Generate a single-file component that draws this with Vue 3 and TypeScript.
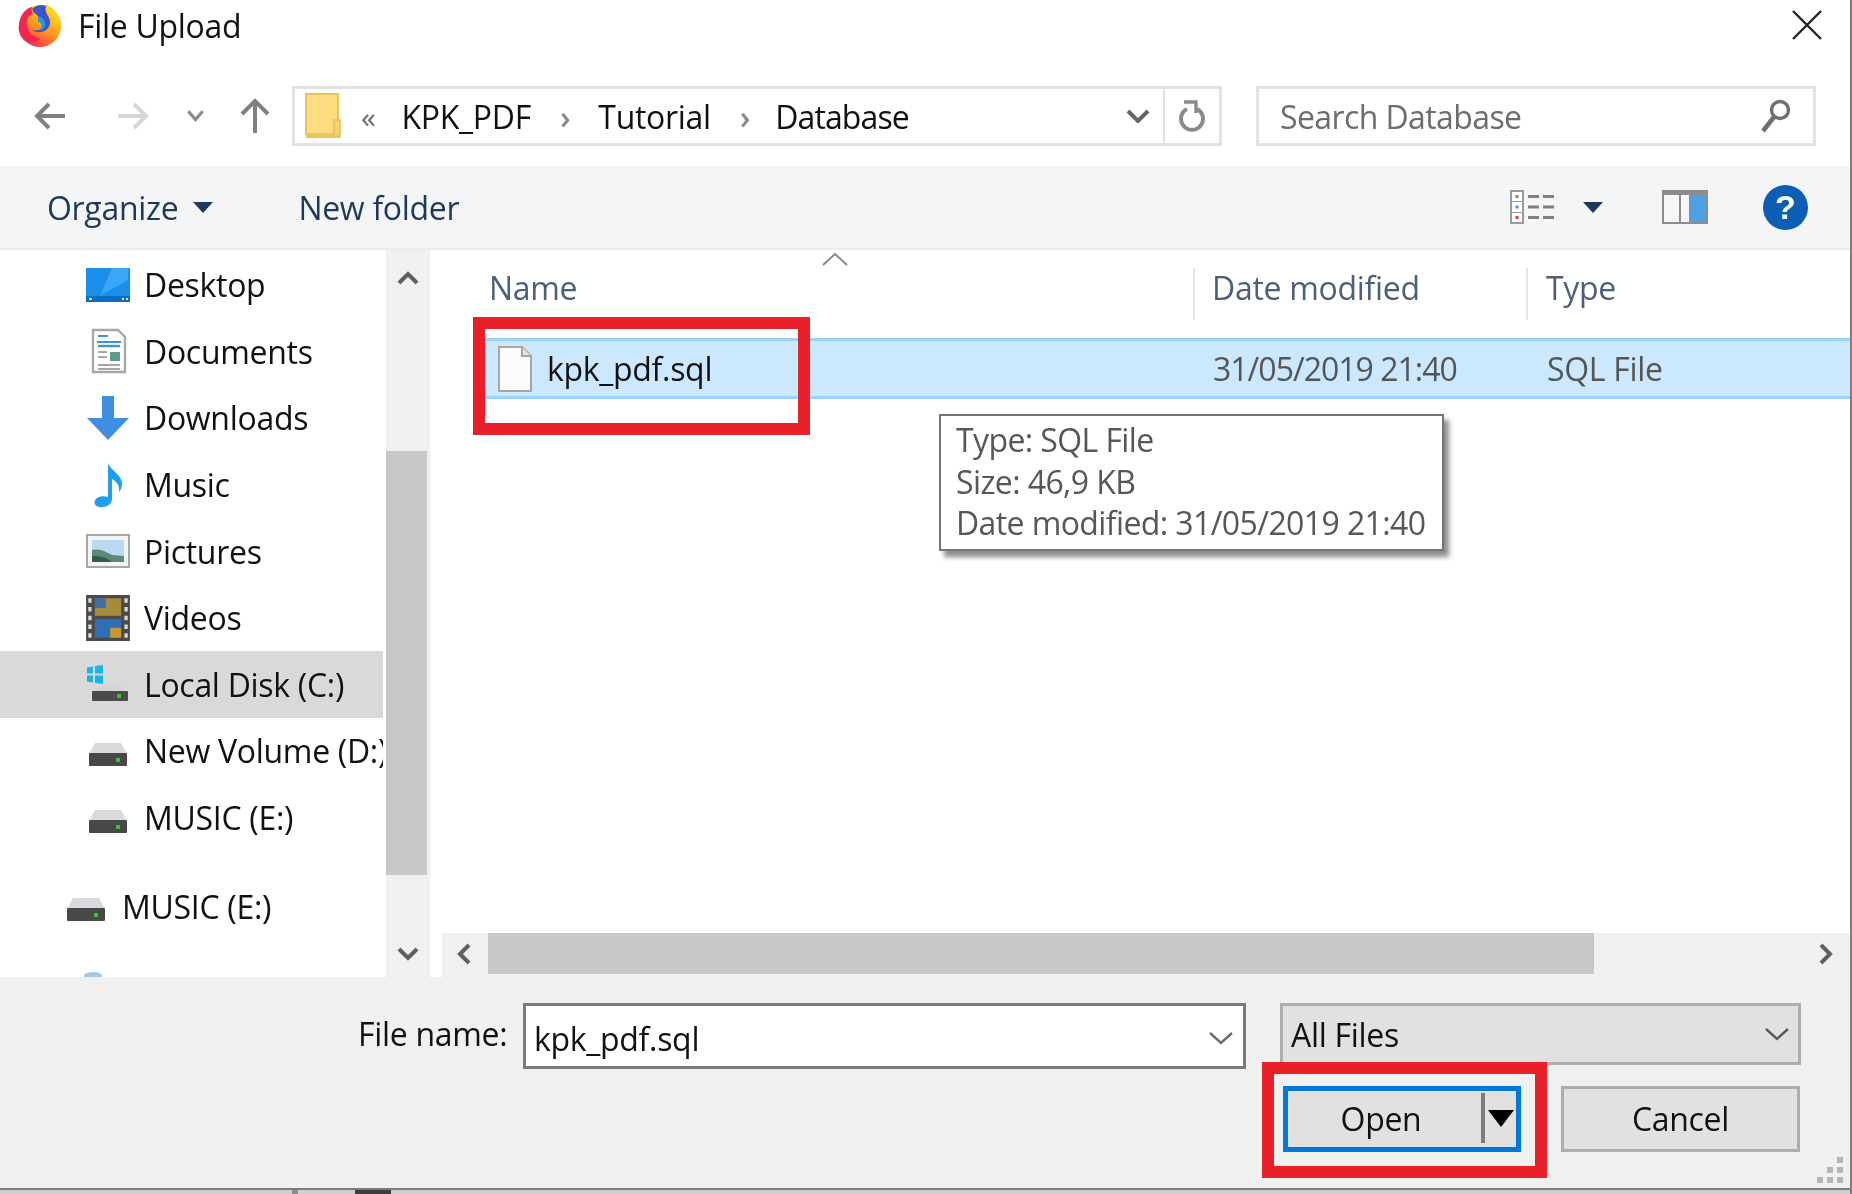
<script setup lang="ts">
interface Place {
  label: string;
  icon: string;
  selected?: boolean;
}

const places: Place[] = [
  { label: "Desktop", icon: "desktop" },
  { label: "Documents", icon: "documents" },
  { label: "Downloads", icon: "downloads" },
  { label: "Music", icon: "music" },
  { label: "Pictures", icon: "pictures" },
  { label: "Videos", icon: "videos" },
  { label: "Local Disk (C:)", icon: "system", selected: true },
  { label: "New Volume (D:)", icon: "drive" },
  { label: "MUSIC (E:)", icon: "drive" },
];

const tooltipLines = [
  "Type: SQL File",
  "Size: 46,9 KB",
  "Date modified: 31/05/2019 21:40",
];
</script>

<template>
  <div class="dialog">
    <header class="titlebar">
      <svg class="fx" viewBox="0 0 44 44">
        <defs>
          <linearGradient id="fxBody" x1="0.8" y1="0.05" x2="0.25" y2="1">
            <stop offset="0" stop-color="#ffe226" />
            <stop offset="0.5" stop-color="#ff9a1f" />
            <stop offset="1" stop-color="#f4284a" />
          </linearGradient>
        </defs>
        <circle cx="22" cy="23" r="21" fill="url(#fxBody)" />
        <path d="M1 21C2 12 8 5 14 4c-1 3 0 5 1 7-6 2-7 7-6 12 1 7 7 12 14 12-6 7-15 6-19 0-3-4-4-9-3-14z" fill="#f2264f" />
        <path d="M14 6c4-4 10-5 14-3-1 4 0 7 2 10 3 4 3 11-2 14-4 3-10 3-14 0 5 1 9 0 11-3 1-3-1-5-4-5-2-3 0-5-2-7-2-1-4-3-5-6z" fill="#3a55c8" />
        <path d="M21 13c4 2 7 6 6 10-1 3-3 4-6 4 3-2 3-4 2-6-1-2-3-3-3-5 0-1 0-2 1-3z" fill="#159fe6" />
        <path d="M28 1c7 4 15 11 15 22-2-6-5-9-8-12-4-3-7-6-7-10z" fill="#ffd21f" />
      </svg>
      <span class="title">File Upload</span>
      <svg class="close" viewBox="0 0 30 30">
        <path d="M1 1l28 28M29 1L1 29" stroke="#222" stroke-width="2.4" fill="none" />
      </svg>
    </header>

    <nav class="navbar">
      <svg class="nav-icon back" viewBox="0 0 34 30">
        <path d="M32 15H4M16 3L4 15l12 12" stroke="#808080" stroke-width="4" fill="none" />
      </svg>
      <svg class="nav-icon forward" viewBox="0 0 34 30">
        <path d="M2 15h28M18 3l12 12-12 12" stroke="#d6d6d6" stroke-width="4" fill="none" />
      </svg>
      <svg class="nav-icon recent" viewBox="0 0 14 10">
        <path d="M1 1l6 7 6-7" stroke="#8a8a8a" stroke-width="2.6" fill="none" />
      </svg>
      <svg class="nav-icon up" viewBox="0 0 32 36">
        <path d="M16 35V4M3 16L16 3l13 13" stroke="#808080" stroke-width="4" fill="none" />
      </svg>

      <div class="address">
        <svg class="folder" viewBox="0 0 36 46">
          <path d="M1 1h32v40H1z" fill="#fcdc80" stroke="#e9c35c" stroke-width="2" />
          <path d="M29 44V27h6v17z" fill="#f9d36b" stroke="#e4bd55" stroke-width="1.5" />
          <path d="M1 42h33v3H1z" fill="#e9c35c" />
        </svg>
        <span class="crumb-more">«</span>
        <span class="crumb crumb-first">KPK_PDF</span>
        <span class="crumb-sep">›</span>
        <span class="crumb">Tutorial</span>
        <span class="crumb-sep">›</span>
        <span class="crumb crumb-last">Database</span>
        <svg class="address-chevron" viewBox="0 0 24 14">
          <path d="M2 2l10 10L22 2" stroke="#666" stroke-width="4" fill="none" />
        </svg>
        <div class="refresh">
          <svg viewBox="0 0 28 36">
            <path d="M9 9a11 11 0 1 0 10 0" stroke="#8a8a8a" stroke-width="4" fill="none" />
            <path d="M6 2h12v11" stroke="#8a8a8a" stroke-width="3.4" fill="none" />
          </svg>
        </div>
      </div>

      <div class="search">
        <span>Search Database</span>
        <svg viewBox="0 0 32 36">
          <circle cx="20" cy="12" r="8.5" stroke="#6f6f6f" stroke-width="3.4" fill="none" />
          <path d="M14 19L3 33" stroke="#6f6f6f" stroke-width="4.6" />
        </svg>
      </div>
    </nav>

    <div class="toolbar">
      <span class="tool">Organize</span>
      <i class="tool-caret organize-caret"></i>
      <span class="tool new-folder">New folder</span>
      <div class="tool-right">
        <svg class="views" viewBox="0 0 46 34">
          <rect x="1" y="1" width="12" height="32" fill="#fff" stroke="#9a9a9a" stroke-width="2" />
          <path d="M2 11.500h10M2 22.500h10" stroke="#9a9a9a" />
          <rect x="5.500" y="5" width="3" height="3" fill="#8a8a8a" />
          <rect x="5.500" y="15.500" width="3" height="3" fill="#4b94e2" />
          <rect x="5.500" y="26" width="3" height="3" fill="#e0404a" />
          <path d="M18 6.500h11M33 6.500h11M18 17h11M33 17h11M18 27.500h11M33 27.500h11" stroke="#808080" stroke-width="3" />
        </svg>
        <i class="tool-caret view-caret"></i>
        <svg class="pane" viewBox="0 0 46 34">
          <rect width="46" height="34" fill="#8c8c8c" />
          <rect x="2" y="5" width="15" height="27" fill="#f6f6f6" />
          <rect x="19" y="5" width="8" height="27" fill="#f6f6f6" />
          <rect x="28" y="5" width="16" height="27" fill="#4f9fe3" />
        </svg>
        <div class="help">?</div>
      </div>
    </div>

    <main class="body">
      <aside class="sidebar">
        <div class="tree">
          <div
            v-for="place in places"
            :key="place.label + place.icon"
            class="place"
            :class="{ selected: place.selected }"
          >
            <span class="place-icon">
              <svg v-if="place.icon === 'desktop'" viewBox="0 0 44 36">
                <rect y="1" width="44" height="34" rx="1" fill="#1a8fea" />
                <path d="M26 1h16v12L14 29z" fill="#3aa6f4" />
                <rect y="29" width="44" height="6" fill="#0a6fc4" />
                <path d="M3 31h3v2H3zM36 31h2v2h-2zM40 31h2v2h-2z" fill="#cfe8fb" />
              </svg>
              <svg v-else-if="place.icon === 'documents'" viewBox="0 0 44 46">
                <path d="M7 2h25l7 7v35H7z" fill="#fff" stroke="#a8a8a8" stroke-width="2.400" />
                <path d="M12 8h10M11 14h24" stroke="#3a92de" stroke-width="2" />
                <path d="M12 18h22" stroke="#3a92de" stroke-width="2.400" />
                <path d="M12 24h9M12 29h9M12 37h22M12 41h22" stroke="#a8a8a8" stroke-width="2" />
                <rect x="24" y="24" width="10" height="9" fill="#5f9a86" />
              </svg>
              <svg v-else-if="place.icon === 'downloads'" viewBox="0 0 44 46">
                <path d="M16 1h12v22h15L22 45 1 23h15z" fill="#3f8fe0" />
              </svg>
              <svg v-else-if="place.icon === 'music'" viewBox="0 0 44 46">
                <path d="M22 1c2 7 13 11 14 20 0 4-1 7-3 9 1-7-3-11-7-13v20c0 6-7 9-13 8-6-1-6-8 0-10 2-1 6-1 9 0z" fill="#1f9df0" />
              </svg>
              <svg v-else-if="place.icon === 'pictures'" viewBox="0 0 44 34">
                <rect x="1" y="1" width="42" height="32" fill="#f4f4f4" stroke="#a8a8a8" stroke-width="2" />
                <rect x="6" y="6" width="32" height="22" fill="#bcd9f2" />
                <path d="M6 16c8-2 14 2 20 5l12 1v6H6z" fill="#5b8a72" />
                <path d="M6 22c8 0 14 1 20 6H6z" fill="#2f5a56" />
              </svg>
              <svg v-else-if="place.icon === 'videos'" viewBox="0 0 40 42">
                <rect width="40" height="42" fill="#4a4a4a" />
                <path d="M2 3h3v4H2zM2 11h3v4H2zM2 19h3v4H2zM2 27h3v4H2zM2 35h3v4H2zM35 3h3v4h-3zM35 11h3v4h-3zM35 19h3v4h-3zM35 27h3v4h-3zM35 35h3v4h-3z" fill="#d8d8d8" />
                <rect x="8" y="3" width="24" height="16" fill="#a88a3c" />
                <rect x="8" y="3" width="10" height="9" fill="#3f6fa8" />
                <rect x="8" y="22" width="24" height="17" fill="#2f6fb8" />
                <rect x="22" y="30" width="10" height="9" fill="#c9982f" />
              </svg>
              <svg v-else-if="place.icon === 'system'" viewBox="0 0 44 36">
                <path d="M1 1.500l6-1v7H1zM9 0l8-1v8.500H9zM1 9.500h6v7l-6-1zM9 9.500h8V18l-8-1z" fill="#19b4ea" />
                <path d="M20 18h14l5 8H6z" fill="#d4d4d4" />
                <rect x="6" y="25" width="36" height="10" rx="1" fill="#4b4b4b" />
                <rect x="31" y="28" width="4" height="4" fill="#3fbf3f" />
              </svg>
              <svg v-else viewBox="0 0 44 36">
                <path d="M9 10h26l6 11H3z" fill="#d8dade" />
                <rect x="3" y="20" width="38" height="13" rx="1" fill="#484848" />
                <rect x="30" y="25" width="4" height="4" fill="#3fbf3f" />
              </svg>
            </span>
            <span class="place-label">{{ place.label }}</span>
          </div>

          <div class="place root-drive">
            <span class="place-icon">
              <svg viewBox="0 0 44 36">
                <path d="M9 10h26l6 11H3z" fill="#d8dade" />
                <rect x="3" y="20" width="38" height="13" rx="1" fill="#484848" />
                <rect x="30" y="25" width="4" height="4" fill="#3fbf3f" />
              </svg>
            </span>
            <span class="place-label">MUSIC (E:)</span>
          </div>
          <div class="clipped-icon"></div>
        </div>

        <div class="vscroll">
          <svg viewBox="0 0 22 14"><path d="M2 12l9-9 9 9" stroke="#606060" stroke-width="4" fill="none" /></svg>
          <div class="vscroll-track">
            <div class="vscroll-thumb"></div>
          </div>
          <svg viewBox="0 0 22 14"><path d="M2 2l9 9 9-9" stroke="#606060" stroke-width="4" fill="none" /></svg>
        </div>
      </aside>

      <section class="files">
        <div class="columns">
          <svg class="sort" viewBox="0 0 26 14"><path d="M1 13L13 2l12 11" stroke="#8a8a8a" stroke-width="2" fill="none" /></svg>
          <div class="col col-name">Name</div>
          <div class="col col-date">Date modified</div>
          <div class="col col-type">Type</div>
        </div>
        <div class="file-row">
          <div class="cell-name">
            <svg viewBox="0 0 34 46">
              <path d="M1 1h23l9 9v35H1z" fill="#fbfbfb" stroke="#a6a6a6" stroke-width="2" />
              <path d="M24 1v9h9" fill="#e4e4e4" stroke="#a6a6a6" stroke-width="2" />
            </svg>
            <span>kpk_pdf.sql</span>
          </div>
          <div class="cell-date">31/05/2019 21:40</div>
          <div class="cell-type">SQL File</div>
        </div>
        <div class="files-space"></div>
        <div class="hscroll">
          <svg viewBox="0 0 14 22"><path d="M12 2l-9 9 9 9" stroke="#606060" stroke-width="4" fill="none" /></svg>
          <div class="hscroll-track">
            <div class="hscroll-thumb"></div>
          </div>
          <svg viewBox="0 0 14 22"><path d="M2 2l9 9-9 9" stroke="#606060" stroke-width="4" fill="none" /></svg>
        </div>
      </section>
    </main>

    <footer class="footer">
      <div class="name-row">
        <label class="name-label">File name:</label>
        <div class="name-input">
          <span>kpk_pdf.sql</span>
          <svg viewBox="0 0 26 14"><path d="M2 2l11 10L24 2" stroke="#6a6a6a" stroke-width="2.400" fill="none" /></svg>
        </div>
        <div class="type-select">
          <span>All Files</span>
          <svg viewBox="0 0 26 14"><path d="M2 2l11 10L24 2" stroke="#5a5a5a" stroke-width="2.400" fill="none" /></svg>
        </div>
      </div>
      <div class="button-row">
        <button class="btn btn-open">
          <span class="open-label">Open</span>
          <i class="open-sep"></i>
          <i class="open-caret"></i>
        </button>
        <button class="btn">Cancel</button>
      </div>
      <svg class="grip" viewBox="0 0 28 28">
        <path d="M20 0h6v6h-6zM10 10h6v6h-6zM20 10h6v6h-6zM0 20h6v6H0zM10 20h6v6h-6zM20 20h6v6h-6z" fill="#b5b5b5" />
      </svg>
    </footer>

    <div class="taskstrip">
      <i class="strip-tick"></i>
      <i class="strip-block"></i>
    </div>

    <div class="tooltip">
      <div v-for="line in tooltipLines" :key="line">{{ line }}</div>
    </div>
    <div class="mark mark-file"></div>
    <div class="mark mark-open"></div>
  </div>
</template>

<style>
html,
body {
  margin: 0;
  background: #fff;
}
</style>

<style scoped>
.dialog {
  position: relative;
  display: flex;
  flex-direction: column;
  width: 1852px;
  height: 1194px;
  box-sizing: border-box;
  overflow: hidden;
  background: #fff;
  border-right: 2px solid #7d7d7d;
  font-family: "Open Sans", "Noto Sans", sans-serif;
  font-size: 32px;
  color: #111;
  letter-spacing: -0.3px;
  filter: blur(0.75px);
}

.titlebar {
  display: flex;
  align-items: center;
  height: 86px;
  flex: none;
  padding: 0 28px 36px 18px;
  box-sizing: border-box;
}

.fx {
  width: 44px;
  height: 44px;
  flex: none;
}

.title {
  margin-left: 16px;
}

.close {
  width: 30px;
  height: 30px;
  margin-left: auto;
}

.navbar {
  display: flex;
  align-items: flex-start;
  height: 80px;
  flex: none;
  padding-left: 33px;
  box-sizing: border-box;
}

.nav-icon {
  flex: none;
  margin-top: 15px;
}

.back {
  width: 34px;
  height: 30px;
}

.forward {
  width: 34px;
  height: 30px;
  margin-left: 49px;
}

.recent {
  width: 17px;
  height: 12px;
  margin-left: 37px;
  margin-top: 24px;
}

.up {
  width: 32px;
  height: 36px;
  margin-left: 35px;
  margin-top: 12px;
}

.address {
  display: flex;
  align-items: center;
  width: 930px;
  height: 60px;
  margin-left: 21px;
  padding-left: 10px;
  box-sizing: border-box;
  border: 3px solid #e2e2e2;
  flex: none;
}

.folder {
  width: 36px;
  height: 46px;
  flex: none;
}

.crumb-more {
  margin-left: 20px;
  color: #6d6d6d;
  font-size: 30px;
}

.crumb {
  margin-left: 26px;
}

.crumb-first {
  margin-left: 26px;
}

.crumb-sep {
  margin-left: 29px;
  color: #8a8a8a;
  font-weight: 600;
}

.crumb-sep + .crumb {
  margin-left: 28px;
}

.crumb-sep + .crumb-last {
  margin-left: 25px;
  letter-spacing: -0.9px;
}

.address-chevron {
  width: 24px;
  height: 14px;
  margin-left: auto;
  margin-right: 13px;
}

.refresh {
  display: flex;
  align-items: center;
  justify-content: center;
  width: 56px;
  height: 100%;
  padding-top: 4px;
  border-left: 2px solid #e2e2e2;
  box-sizing: border-box;
}

.refresh svg {
  width: 28px;
  height: 36px;
}

.search {
  display: flex;
  align-items: center;
  justify-content: space-between;
  width: 560px;
  height: 60px;
  margin-left: 34px;
  padding: 0 21px 0 21px;
  box-sizing: border-box;
  border: 3px solid #e2e2e2;
  color: #6d6d6d;
  letter-spacing: -0.6px;
  flex: none;
}

.search svg {
  width: 32px;
  height: 36px;
}

.toolbar {
  display: flex;
  align-items: center;
  height: 84px;
  flex: none;
  padding-left: 47px;
  box-sizing: border-box;
  background: #f4f5f7;
  border-bottom: 2px solid #ececec;
  color: #1e395b;
}

.tool-caret {
  display: block;
  width: 0;
  height: 0;
  border-left: 10px solid transparent;
  border-right: 10px solid transparent;
  border-top: 11px solid #1e395b;
}

.organize-caret {
  margin-left: 15px;
}

.new-folder {
  margin-left: 85px;
}

.tool-right {
  display: flex;
  align-items: center;
  margin-left: auto;
  padding-right: 42px;
}

.views {
  width: 46px;
  height: 34px;
}

.view-caret {
  margin-left: 27px;
}

.pane {
  width: 46px;
  height: 34px;
  margin-left: 59px;
}

.help {
  width: 45px;
  height: 45px;
  margin-left: 55px;
  border-radius: 50%;
  background: #0a5fb4;
  color: #fff;
  font-family: "Liberation Sans", sans-serif;
  font-weight: 700;
  font-size: 34px;
  line-height: 45px;
  text-align: center;
  letter-spacing: 0;
}

.body {
  display: flex;
  height: 727px;
  flex: none;
}

.sidebar {
  display: flex;
  width: 442px;
  flex: none;
}

.tree {
  width: 386px;
  flex: none;
  padding-top: 1.500px;
  box-sizing: border-box;
  overflow: hidden;
}

.place {
  display: flex;
  align-items: center;
  width: 383px;
  height: 66.6px;
  padding-left: 86px;
  box-sizing: border-box;
  white-space: nowrap;
  overflow: hidden;
}

.place.selected {
  background: #d9d9d9;
}

.place-icon {
  display: flex;
  align-items: center;
  justify-content: center;
  width: 44px;
  height: 46px;
  flex: none;
}

.place-icon svg {
  max-width: 44px;
  width: 44px;
  height: 46px;
}

.place-label {
  margin-left: 14px;
}

.root-drive {
  margin-top: 22px;
  padding-left: 64px;
}

.clipped-icon {
  width: 18px;
  height: 6px;
  margin: 33px 0 0 84px;
  background: #7fb2d8;
  border-radius: 50% 50% 0 0;
  opacity: 0.7;
}

.vscroll {
  display: flex;
  flex-direction: column;
  align-items: center;
  width: 44px;
  background: #f0f0f0;
  flex: none;
}

.vscroll svg {
  width: 22px;
  height: 14px;
  margin: 16px 0;
}

.vscroll svg:first-child {
  margin-top: 21px;
  margin-bottom: 11px;
}

.vscroll-track {
  flex: 1;
  width: 100%;
  padding: 171px 3px 72px 0;
  box-sizing: border-box;
  margin: -16px 0;
}

.vscroll-thumb {
  width: 41px;
  height: 100%;
  background: #c8c8c8;
}

.files {
  display: flex;
  flex-direction: column;
  flex: 1;
  min-width: 0;
}

.columns {
  position: relative;
  display: flex;
  height: 88px;
  flex: none;
  color: #4c607a;
  padding-top: 18px;
  box-sizing: border-box;
}

.sort {
  position: absolute;
  left: 380px;
  top: 2px;
  width: 26px;
  height: 14px;
}

.col {
  height: 52px;
  display: flex;
  align-items: center;
  padding-bottom: 14px;
  box-sizing: border-box;
}

.col-name {
  width: 753px;
  padding-left: 47px;
  border-right: 2px solid #e5e5e5;
}

.col-date {
  width: 333px;
  padding-left: 17px;
  border-right: 2px solid #e5e5e5;
}

.col-type {
  padding-left: 18px;
}

.file-row {
  display: flex;
  align-items: center;
  height: 61px;
  margin-left: 43px;
  flex: none;
  box-sizing: border-box;
  background: #cce8ff;
  border-top: 3px solid #99d1ff;
  border-bottom: 3px solid #99d1ff;
}

.cell-name {
  display: flex;
  align-items: center;
  width: 728px;
  padding-left: 13px;
  box-sizing: border-box;
  flex: none;
}

.cell-name svg {
  width: 34px;
  height: 46px;
  flex: none;
}

.cell-name span {
  margin-left: 15px;
}

.cell-date {
  width: 334px;
  flex: none;
  color: #555;
  letter-spacing: -1px;
}

.cell-type {
  color: #555;
}

.files-space {
  flex: 1;
}

.hscroll {
  display: flex;
  align-items: center;
  height: 44px;
  flex: none;
  background: #f0f0f0;
}

.hscroll svg {
  width: 14px;
  height: 22px;
  flex: none;
  margin: 0 14px 3px 15px;
}

.hscroll svg:last-child {
  margin-left: 18px;
  margin-right: 17px;
}

.hscroll-track {
  flex: 1;
  height: 41px;
  margin-bottom: 3px;
  margin-left: 3px;
  padding-right: 207px;
  box-sizing: border-box;
}

.hscroll-thumb {
  height: 100%;
  background: #c8c8c8;
}

.footer {
  position: relative;
  display: flex;
  flex-direction: column;
  height: 211px;
  flex: none;
  padding-top: 26px;
  box-sizing: border-box;
  background: #f0f0f0;
}

.name-row {
  display: flex;
  align-items: flex-start;
  padding-left: 358px;
}

.name-label {
  width: 165px;
  height: 62px;
  line-height: 62px;
  flex: none;
}

.name-input {
  display: flex;
  align-items: center;
  justify-content: space-between;
  width: 723px;
  height: 66px;
  padding: 4px 9px 0 8px;
  box-sizing: border-box;
  border: 3px solid #7a7a7a;
  background: #fff;
  flex: none;
}

.name-input svg,
.type-select svg {
  width: 26px;
  height: 14px;
}

.type-select {
  display: flex;
  align-items: center;
  justify-content: space-between;
  width: 521px;
  height: 62px;
  margin-left: 34px;
  padding: 0 8px 0 8px;
  box-sizing: border-box;
  border: 3px solid #adadad;
  background: #e1e1e1;
  flex: none;
}

.button-row {
  display: flex;
  justify-content: flex-end;
  gap: 40px;
  margin-top: 17px;
  padding-right: 50px;
}

.btn {
  position: relative;
  width: 239px;
  height: 66px;
  padding: 0 0 2px;
  box-sizing: border-box;
  border: 3px solid #adadad;
  background: #e1e1e1;
  font: inherit;
  letter-spacing: inherit;
  color: inherit;
}

.btn-open {
  display: flex;
  align-items: center;
  width: 238px;
  border: 5px solid #0078d7;
}

.open-label {
  width: 190px;
  text-align: center;
  margin-left: 3px;
  padding-right: 10px;
  box-sizing: border-box;
}

.open-sep {
  display: block;
  width: 4px;
  height: 50px;
  flex: none;
  background: #7c7c7c;
}

.open-caret {
  display: block;
  width: 0;
  height: 0;
  margin-left: 3px;
  border-left: 13px solid transparent;
  border-right: 13px solid transparent;
  border-top: 17px solid #000;
}

.grip {
  position: absolute;
  right: 5px;
  bottom: 3px;
  width: 28px;
  height: 28px;
}

.taskstrip {
  position: relative;
  flex: 1;
  background: #cfcfcf;
  border-top: 2px solid #7d7d7d;
}

.strip-tick {
  position: absolute;
  left: 292px;
  top: 0;
  width: 6px;
  height: 6px;
  background: #8c8c8c;
}

.strip-block {
  position: absolute;
  left: 355px;
  top: 0;
  width: 36px;
  height: 6px;
  background: #3d3d3d;
}

.tooltip {
  position: absolute;
  left: 939px;
  top: 414px;
  width: 505px;
  height: 137px;
  padding: 3px 0 0 15px;
  box-sizing: border-box;
  background: #fff;
  border: 2px solid #767676;
  box-shadow: 5px 6px 5px rgba(0, 0, 0, 0.45);
  color: #575757;
  letter-spacing: -0.6px;
  line-height: 41.500px;
  white-space: nowrap;
}

.mark {
  position: absolute;
  box-sizing: border-box;
  border: 12px solid #e8202a;
}

.mark-file {
  left: 473px;
  top: 317px;
  width: 337px;
  height: 118px;
}

.mark-open {
  left: 1262px;
  top: 1062px;
  width: 285px;
  height: 116px;
}
</style>
